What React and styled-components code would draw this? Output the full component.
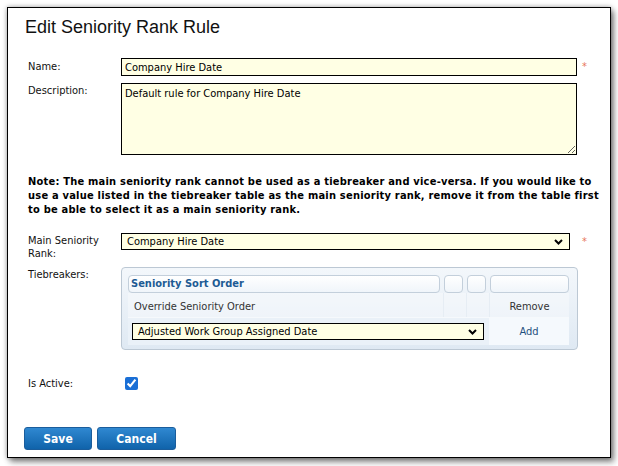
import styled, { createGlobalStyle } from 'styled-components';

const GlobalStyle = createGlobalStyle`
  body {
    margin: 0;
    background: #ffffff;
    font-family: "DejaVu Sans Condensed", "DejaVu Sans", sans-serif;
    font-size: 11px;
    color: #000;
  }
`;

function App() {
  return (
    <>
      <GlobalStyle />
      <Page>
        <Dialog>
          <Title>Edit Seniority Rank Rule</Title>

          <Row $mt={20}>
            <Label $pt={2}>Name:</Label>
            <TextInput defaultValue="Company Hire Date" />
            <Required>*</Required>
          </Row>

          <Row $mt={7}>
            <Label $pt={1}>Description:</Label>
            <TextArea defaultValue="Default rule for Company Hire Date" />
          </Row>

          <Note>
            Note: The main seniority rank cannot be used as a tiebreaker and
            vice-versa. If you would like to use a value listed in the
            tiebreaker table as the main seniority rank, remove it from the
            table first to be able to select it as a main seniority rank.
          </Note>

          <Row $mt={16}>
            <Label $pt={1}>
              Main Seniority
              <br />
              Rank:
            </Label>
            <Select $width={449}>
              <span>Company Hire Date</span>
              <Chevron />
            </Select>
            <Required $ml={12}>*</Required>
          </Row>

          <Row $mt={7}>
            <Label $pt={1}>Tiebreakers:</Label>
            <Panel>
              <HeadCell>Seniority Sort Order</HeadCell>
              <HeadCell />
              <HeadCell />
              <HeadCell />

              <SubCell>Override Seniority Order</SubCell>
              <SubCell />
              <SubCell />
              <SubCell $center>Remove</SubCell>

              <BodyCell $span={3}>
                <Select $width={352}>
                  <span>Adjusted Work Group Assigned Date</span>
                  <Chevron />
                </Select>
              </BodyCell>
              <AddCell>Add</AddCell>
            </Panel>
          </Row>

          <Row $mt={26}>
            <Label $pt={1}>Is Active:</Label>
            <Check type="checkbox" defaultChecked />
          </Row>

          <Buttons>
            <Button $width={68}>Save</Button>
            <Button $width={79}>Cancel</Button>
          </Buttons>
        </Dialog>
      </Page>
    </>
  );
}

function Chevron() {
  return (
    <svg width="9" height="6" viewBox="0 0 9 6">
      <path d="M1 1 L4.5 4.5 L8 1" fill="none" stroke="#000" strokeWidth="2" />
    </svg>
  );
}

export default App;

const Page = styled.div`
  padding: 7px;
  width: 618px;
  height: 466px;
  box-sizing: border-box;
`;

const Dialog = styled.div`
  width: 604px;
  height: 451px;
  box-sizing: border-box;
  border: 1px solid #000;
  background: #fff;
  box-shadow: 0 0 5px rgba(0, 0, 0, 0.35), 3px 4px 6px rgba(0, 0, 0, 0.45);
  padding: 8px 16px 7px 16px;
  display: flex;
  flex-direction: column;
`;

const Title = styled.h1`
  margin: 0;
  font-family: "Liberation Sans", Arial, sans-serif;
  font-weight: normal;
  font-size: 18px;
  line-height: 21px;
  color: #111;
  padding-left: 1px;
  padding-top: 1px;
`;

const Row = styled.div`
  display: flex;
  align-items: flex-start;
  margin-top: ${(p) => p.$mt || 0}px;
`;

const Label = styled.div`
  width: 97px;
  flex: none;
  box-sizing: border-box;
  padding-left: 4px;
  padding-top: ${(p) => p.$pt || 0}px;
  line-height: 13px;
  color: #111;
`;

const fieldBox = `
  box-sizing: border-box;
  border: 1px solid #000;
  background: #ffffe4;
  font-family: "DejaVu Sans Condensed", "DejaVu Sans", sans-serif;
  font-size: 11px;
  color: #000;
  outline: none;
  margin: 0;
`;

const TextInput = styled.input`
  ${fieldBox}
  width: 456px;
  height: 18px;
  padding: 0 3px;
`;

const TextArea = styled.textarea`
  ${fieldBox}
  width: 456px;
  height: 72px;
  padding: 3px 3px;
  resize: vertical;
  line-height: 13px;
`;

const Required = styled.span`
  color: #e8785a;
  font-size: 11px;
  margin-left: ${(p) => p.$ml || 5}px;
  line-height: 18px;
`;

const Note = styled.p`
  margin: 20px 0 0 0;
  padding-left: 4px;
  width: 574px;
  font-weight: bold;
  line-height: 14px;
  letter-spacing: 0.22px;
  color: #000;
`;

const Select = styled.div`
  ${fieldBox}
  width: ${(p) => p.$width}px;
  height: 17px;
  padding: 0 6px 0 5px;
  display: flex;
  align-items: center;
  justify-content: space-between;
  line-height: 15px;
`;

const Panel = styled.div`
  width: 457px;
  box-sizing: border-box;
  border: 1px solid #bcc8d4;
  border-radius: 4px;
  background: linear-gradient(#f3f7fb, #dfe9f3);
  padding: 7px 8px 4px 6px;
  display: grid;
  grid-template-columns: 316px 23px 23px 79px;
  grid-template-rows: 18px 24px 28px;
`;

const HeadCell = styled.div`
  box-sizing: border-box;
  margin-right: 4px;
  &:nth-child(4) {
    margin-right: 0;
  }
  border: 1px solid #c3cfdb;
  border-radius: 4px;
  background: linear-gradient(#ffffff, #f0f5fa);
  color: #1d5b94;
  font-weight: bold;
  font-size: 11px;
  line-height: 15px;
  padding-left: 2px;
`;

const SubCell = styled.div`
  display: flex;
  align-items: center;
  justify-content: ${(p) => (p.$center ? 'center' : 'flex-start')};
  padding-left: ${(p) => (p.$center ? 0 : 6)}px;
  padding-top: 2px;
  color: #333;
  background: rgba(255, 255, 255, 0.35);
  border-right: 1px solid #e6edf4;
  &:nth-child(8) {
    border-right: none;
  }
`;

const BodyCell = styled.div`
  grid-column: span ${(p) => p.$span || 1};
  display: flex;
  align-items: center;
  padding-left: 4px;
  background: #eaf1f8;
  border-top: 1px solid #f6f9fc;
`;

const AddCell = styled.div`
  display: flex;
  align-items: center;
  justify-content: center;
  background: #f5f9fd;
  color: #1f4f7e;
  border-top: 1px solid #f6f9fc;
  margin-left: -1px;
`;

const Check = styled.input`
  width: 13px;
  height: 13px;
  margin: 1px 0 0 4px;
  accent-color: #1a6fd6;
`;

const Buttons = styled.div`
  display: flex;
  gap: 5px;
  margin-top: auto;
`;

const Button = styled.button`
  width: ${(p) => p.$width}px;
  height: 23px;
  box-sizing: border-box;
  border: 1px solid #1a5d9c;
  border-radius: 3px;
  background: linear-gradient(#2f88d1, #1063aa);
  color: #fff;
  font-family: "DejaVu Sans Condensed", "DejaVu Sans", sans-serif;
  font-weight: bold;
  font-size: 12px;
  padding: 0;
  cursor: pointer;
`;
